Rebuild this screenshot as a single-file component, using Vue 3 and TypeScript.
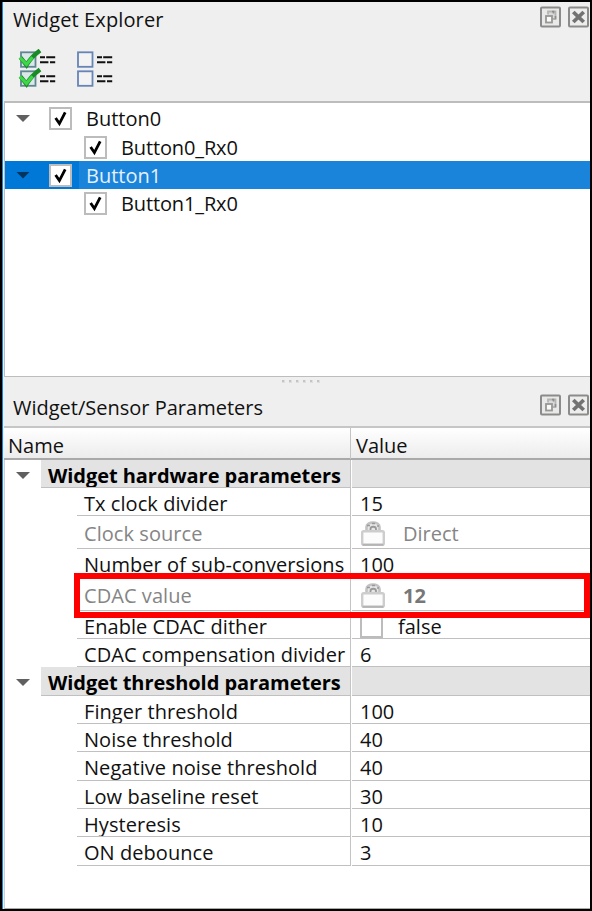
<script setup lang="ts">
interface TreeItem {
  label: string
  child?: boolean
  selected?: boolean
  height: number
}
interface ParamRow {
  name: string
  value?: string
  kind?: 'group' | 'locked' | 'check'
  bold?: boolean
  height: number
}

const tree: TreeItem[] = [
  { label: 'Button0', height: 29 },
  { label: 'Button0_Rx0', child: true, height: 28 },
  { label: 'Button1', selected: true, height: 28 },
  { label: 'Button1_Rx0', child: true, height: 29 },
]

const rows: ParamRow[] = [
  { name: 'Widget hardware parameters', kind: 'group', height: 28 },
  { name: 'Tx clock divider', value: '15', height: 28 },
  { name: 'Clock source', value: 'Direct', kind: 'locked', height: 33 },
  { name: 'Number of sub-conversions', value: '100', height: 29 },
  { name: 'CDAC value', value: '12', kind: 'locked', bold: true, height: 33 },
  { name: 'Enable CDAC dither', value: 'false', kind: 'check', height: 28 },
  { name: 'CDAC compensation divider', value: '6', height: 28 },
  { name: 'Widget threshold parameters', kind: 'group', height: 29 },
  { name: 'Finger threshold', value: '100', height: 28 },
  { name: 'Noise threshold', value: '40', height: 28 },
  { name: 'Negative noise threshold', value: '40', height: 29 },
  { name: 'Low baseline reset', value: '30', height: 28 },
  { name: 'Hysteresis', value: '10', height: 28 },
  { name: 'ON debounce', value: '3', height: 29 },
]
const panels = ['Widget Explorer', 'Widget/Sensor Parameters']
</script>

<template>
  <div class="window">
    <section v-for="(title, p) in panels" :key="title" :class="p ? 'params' : 'explorer'">
      <header class="titlebar">
        <h2>{{ title }}</h2>
        <div class="dock-buttons">
          <svg width="22" height="22" viewBox="0 0 22 22">
            <rect x="1" y="1.5" width="19" height="19" rx="1" fill="#e9e9e9" stroke="#8b8b89" stroke-width="2" />
            <path d="M8 8.5V5.5h7.5V13h-3" fill="#dadada" stroke="#b4b4b2" stroke-width="1.8" />
            <path d="M12 5.5h1.5v2M15.5 10v3" fill="none" stroke="#8e8e8c" stroke-width="1.6" />
            <rect x="6" y="10" width="6" height="6.5" fill="#fafafa" stroke="#979795" stroke-width="1.8" />
          </svg>
          <svg width="22" height="22" viewBox="0 0 22 22">
            <rect x="1" y="1.5" width="19" height="19" rx="1" fill="#ededed" stroke="#8b8b89" stroke-width="2" />
            <path d="M5.3 6l10.4 10M15.7 6L5.3 16" stroke="#727272" stroke-width="3.8" />
          </svg>
        </div>
      </header>

      <template v-if="p === 0">
        <div class="toolbar">
          <svg v-for="on in [true, false]" :key="String(on)" width="40" height="40" viewBox="0 0 40 40">
            <g v-for="y in [0, 19]" :key="y" :transform="`translate(0 ${y})`">
              <rect x="3" y="3.3" width="14.5" height="14.5" :fill="on ? '#dbe7e8' : '#f3f3f3'" :stroke="on ? '#5f8793' : '#6684b5'" stroke-width="1.8" />
              <path d="M22 8.2h5m1.2 0h9M22 13.2h8.4m1.6 0h5.2" stroke="#111" stroke-width="2" />
              <template v-if="on">
                <path d="M2.5 8.5l6 7.5C12 10 16 6 22 1.5" fill="none" stroke="#198b26" stroke-width="4.4" />
                <path d="M1.8 8.5l6.7 6.8 6-7" fill="none" stroke="#3ed748" stroke-width="3.2" />
              </template>
            </g>
          </svg>
        </div>
        <div class="tree">
          <div v-for="t in tree" :key="t.label" class="tree-row" :class="{ child: t.child, selected: t.selected }" :style="{ height: t.height + 'px' }">
            <span class="expander"><i v-if="!t.child" class="arrow"></i></span>
            <span class="checkbox">
              <svg width="17" height="17" viewBox="0 0 17 17"><path d="M3.6 8l3.8 5.6L13.2 2.4" fill="none" stroke="#000" stroke-width="2.8" /></svg>
            </span>
            <span class="tree-label">{{ t.label }}</span>
          </div>
        </div>
        <div class="splitter"><i v-for="n in 6" :key="n"></i></div>
      </template>

      <template v-else>
        <div class="columns"><span class="col-name">Name</span><span>Value</span></div>
        <div class="grid">
          <div v-for="r in rows" :key="r.name" class="row" :class="[r.kind, { emphasized: r.bold }]" :style="{ height: r.height + 'px' }">
            <span class="gutter"><i v-if="r.kind === 'group'" class="arrow"></i></span>
            <span class="name">{{ r.name }}</span>
            <span class="value">
              <svg v-if="r.kind === 'locked'" class="lock" width="26" height="27" viewBox="0 0 26 27">
                <path d="M6.5 12V7c0-6 13-6 13 0v5" fill="#e6e6e6" stroke="#c2c2c2" stroke-width="2.6" />
                <path d="M10.5 12V9c0-3 5.5-3 5.5 0v3" fill="none" stroke="#999" stroke-width="1.8" />
                <path d="M7 5.5h3M12 3.5h3M17 6h2" stroke="#999" stroke-width="1.6" />
                <rect x="2.2" y="11.3" width="21.6" height="13.5" rx="1.5" fill="#fcfcfc" stroke="#cdcdcd" stroke-width="2.4" />
                <path d="M2.5 24.8h21" stroke="#b4b4b4" stroke-width="2" />
              </svg>
              <span v-if="r.kind === 'check'" class="checkbox"></span>
              <span>{{ r.value }}</span>
            </span>
          </div>
        </div>
      </template>
    </section>
    <div class="highlight"></div>
  </div>
</template>

<style>
body { background: #000; }
</style>

<style scoped>
* { box-sizing: border-box; }
.window {
  position: relative;
  width: 592px;
  height: 911px;
  padding: 2px 2px 2px 2px;
  background: #000;
  display: flex;
  flex-direction: column;
  overflow: hidden;
  font-family: "Open Sans", "Noto Sans", sans-serif;
  font-size: 20px;
  line-height: 28px;
  color: #111;
  white-space: nowrap;
}
section { background: #efefef; border-left: 1px solid #1a83da; padding-left: 1px; display: flex; flex-direction: column; }
.params { flex: 1; min-height: 0; }
.titlebar { display: flex; justify-content: space-between; padding: 4px 0 0 9px; height: 38px; }
.params .titlebar { padding-top: 6px; }
h2 { margin: 0; font-size: 20px; line-height: 28px; font-weight: 400; }
.explorer h2 { letter-spacing: .13px; }
.dock-buttons { display: flex; gap: 6px; padding-top: 0; }
.toolbar { display: flex; gap: 17px; height: 61px; padding: 9px 0 0 14px; }
.tree { height: 276px; border: solid #bdbdbd; border-width: 2px 0 1px 1px; background: #fff; padding-top: 1px; }
.tree-row { display: flex; align-items: center; }
.expander { width: 44px; padding-left: 11px; flex: none; }
.child .expander { width: 79px; }
.arrow { display: block; width: 14px; height: 7px; background: #606060; clip-path: polygon(0 0, 100% 0, 50% 100%); }
.selected { background: #0078d7; color: #e5f1fb; }
.selected .arrow { background: #00355f; }
.checkbox { width: 23px; height: 23px; flex: none; border: 2px solid #bcbcbc; background: #fff; display: flex; align-items: center; justify-content: center; }
.tree-label { flex: 1; align-self: stretch; margin-left: 7px; padding-left: 7px; line-height: 30px; }
.child .tree-label { letter-spacing: -.13px; }
.selected .tree-label { background: #1a83da; }
.splitter { height: 11px; display: flex; gap: 4px; justify-content: center; padding: 3px 0 0 7px; }
.splitter i { width: 3px; height: 3px; background: #c4c4c4; border: 1px solid #dedede; border-width: 0 1px 1px 0; }
.columns { height: 34px; flex: none; border-top: 2px solid #c6c6c6; border-bottom: 2px solid #a9a9a9; background: linear-gradient(#fff, #ececec); display: flex; line-height: 35px; padding-left: 4px; }
.col-name { width: 343px; height: 31px; margin-right: 5px; border-right: 1px solid #c4c4c4; }
.grid { flex: 1; border-left: 1px solid #d0d0d0; border-bottom: 1px solid #aaa; background: #fff; }
.row { display: flex; line-height: 32px; }
.gutter { width: 72px; flex: none; padding-left: 11px; }
.name { width: 274px; padding-left: 7px; border-right: 1px solid #c4c4c4; border-bottom: 1px solid #c0c0c0; overflow: hidden; letter-spacing: .06px; }
.value { flex: 1; padding-left: 8px; border-bottom: 1px solid #c0c0c0; margin-left: 1px; display: flex; overflow: hidden; }
.group .gutter { width: 36px; padding-top: 12px; }
.group .name { width: 310px; background: #e3e3e3; font-weight: 700; color: #000; letter-spacing: -.05px; }
.group .value { background: #e3e3e3; }
.locked { color: #858585; line-height: 36px; }
.emphasized .value { font-weight: 700; color: #777; }
.locked .value { gap: 17px; }
.lock { margin-top: 4px; flex: none; }
.check .value { gap: 15px; }
.check .checkbox { margin-top: 4px; }
.highlight { position: absolute; left: 74px; top: 573px; width: 516px; height: 45px; border: 6px solid #f00; }
</style>
